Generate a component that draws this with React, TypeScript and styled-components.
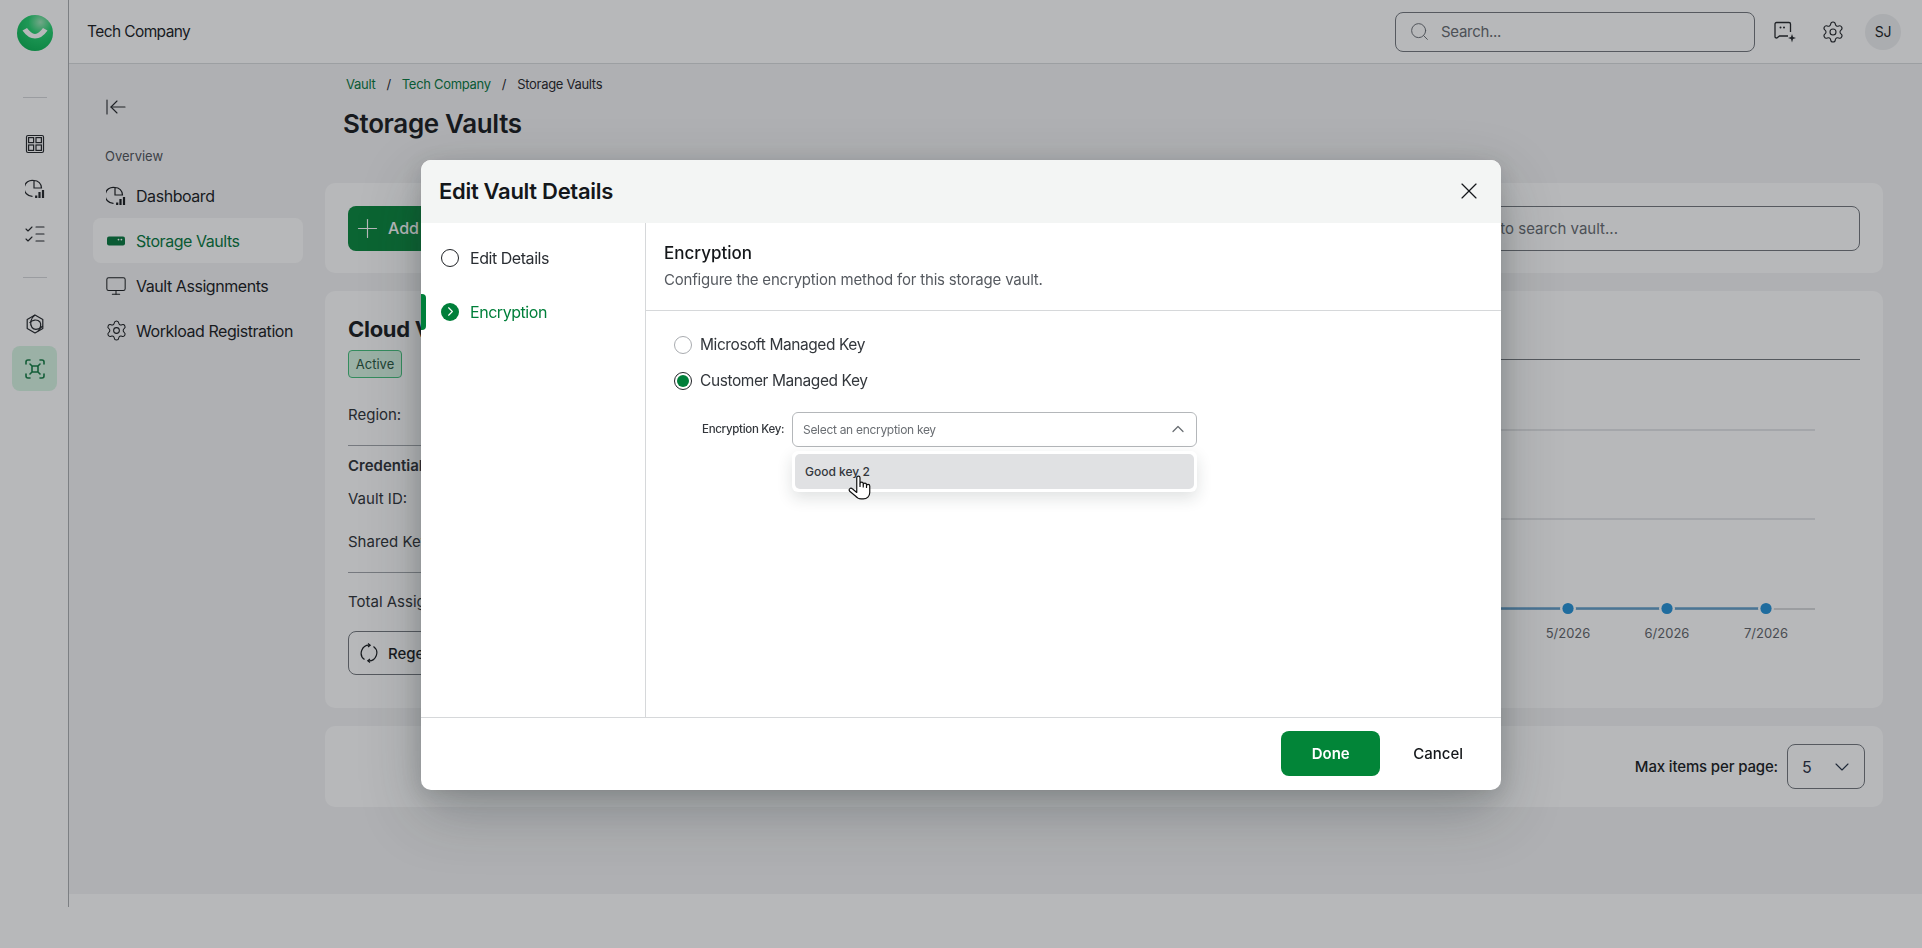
import React from 'react'
import styled, { createGlobalStyle } from 'styled-components'
import {
  ArrowLeftToLine,
  ChevronDown,
  ChevronRight,
  ChevronUp,
  ListChecks,
  Monitor,
  Plus,
  Search,
  Settings,
  X,
} from 'lucide-react'

const GlobalStyle = createGlobalStyle`
  html, body {
    margin: 0;
    height: 100%;
    overflow: hidden;
    font-family: Inter, "Noto Sans", sans-serif;
    color: #14171a;
  }
  * { box-sizing: border-box; }
`

const Shell = styled.div`
  display: flex;
  width: 100%;
  height: 948px;
  background: #fff;
`

const Rail = styled.nav`
  width: 69px;
  height: 907px;
  flex: none;
  display: flex;
  flex-direction: column;
  align-items: center;
  padding: 15px 0 0 1px;
  border-right: 1px solid #a9abaf;
  background: #fff;
`

const RailDivider = styled.div<{ $top: number }>`
  width: 24px;
  height: 1px;
  flex: none;
  margin: ${({ $top }) => $top}px 0 23px;
  background: #d4d6d9;
`

const RailItem = styled.div<{ $active?: boolean }>`
  width: 45px;
  height: 45px;
  flex: none;
  display: flex;
  align-items: center;
  justify-content: center;
  border-radius: 8px;
  color: #1f2226;
  background: ${({ $active }) => ($active ? '#d6f5e2' : 'transparent')};
`

const Main = styled.div`
  flex: 1;
  min-width: 0;
  display: flex;
  flex-direction: column;
  background: #f4f4f5;
`

const TopBar = styled.header`
  height: 64px;
  flex: none;
  display: flex;
  align-items: center;
  padding: 0 21px 0 18px;
  border-bottom: 1px solid #d8dadc;
  background: #fff;
`

const CompanyName = styled.div`
  flex: 1;
  font-size: 15.5px;
  letter-spacing: -0.6px;
`

const TopSearch = styled.div`
  width: 360px;
  height: 40px;
  display: flex;
  align-items: center;
  gap: 11px;
  padding-left: 13px;
  margin-right: 19px;
  border: 1px solid #70747a;
  border-radius: 8px;
  color: #63676d;
  font-size: 15px;
  letter-spacing: -0.3px;
`

const TopActions = styled.div`
  display: flex;
  align-items: center;
  gap: 25px;
  color: #1f2226;
`

const Avatar = styled.div`
  width: 36px;
  height: 36px;
  margin-left: 20px;
  display: flex;
  align-items: center;
  justify-content: center;
  border-radius: 50%;
  font-size: 14px;
  letter-spacing: -0.3px;
  background: #eeeff0;
`

const Body = styled.div`
  flex: 1;
  min-height: 0;
  display: flex;
`

const Sidebar = styled.aside`
  width: 256px;
  flex: none;
  padding: 31px 22px 0 24px;
`

const CollapseButton = styled.div`
  height: 24px;
  margin-left: 11px;
  color: #1f2226;
`

const SidebarLabel = styled.div`
  margin: 27px 0 7px 12px;
  font-size: 13px;
  line-height: 20px;
  color: #4c5056;
`

const NavItem = styled.div<{ $active?: boolean }>`
  height: 45px;
  display: flex;
  align-items: center;
  gap: 11px;
  padding-left: 14px;
  border-radius: 8px;
  font-size: 16px;
  letter-spacing: -0.45px;
  color: ${({ $active }) => ($active ? '#00753a' : '#14171a')};
  background: ${({ $active }) => ($active ? '#fff' : 'transparent')};
`

const NavIcon = styled.span`
  width: 18px;
  flex: none;
  display: flex;
  justify-content: center;

  svg {
    flex: none;
  }
`

const Content = styled.main`
  flex: 1;
  min-width: 0;
  padding: 10px 39px 0 0;
`

const Breadcrumb = styled.div`
  display: flex;
  gap: 11px;
  padding-left: 21px;
  font-size: 13px;
  line-height: 20px;
  letter-spacing: -0.3px;
  color: #1d2126;
`

const Crumb = styled.span<{ $link?: boolean }>`
  color: ${({ $link }) => ($link ? '#00753a' : 'inherit')};
`

const PageTitle = styled.h1`
  margin: 14px 0 43px 18px;
  font-size: 26px;
  line-height: 32px;
  font-weight: 600;
  letter-spacing: -0.35px;
`

const Card = styled.section`
  border-radius: 10px;
  background: #fff;
`

const ToolbarCard = styled(Card)`
  height: 90px;
  display: flex;
  align-items: center;
  justify-content: space-between;
  padding: 0 23px;
  margin-bottom: 18px;
`

const AddButton = styled.div`
  width: 170px;
  height: 45px;
  display: flex;
  align-items: center;
  gap: 5px;
  padding-left: 4px;
  border-radius: 8px;
  font-size: 16px;
  font-weight: 500;
  color: #fff;
  background: #028538;
`

const VaultSearch = styled.div`
  width: 440px;
  height: 45px;
  display: flex;
  align-items: center;
  padding-left: 40px;
  border: 1px solid #70747a;
  border-radius: 8px;
  font-size: 15px;
  color: #63676d;
`

const VaultCard = styled(Card)`
  height: 417px;
  display: flex;
  padding: 23px 23px 0;
  margin-bottom: 18px;
`

const VaultInfo = styled.div`
  width: 420px;
  flex: none;
`

const VaultName = styled.h2`
  margin: 0;
  font-size: 22px;
  line-height: 30px;
  font-weight: 700;
  letter-spacing: -0.3px;
`

const Badge = styled.div`
  width: 54px;
  height: 28px;
  margin-top: 6px;
  display: flex;
  align-items: center;
  justify-content: center;
  border: 1px solid #3fbf78;
  border-radius: 4px;
  font-size: 13px;
  color: #22523a;
  background: #d6f5e2;
`

const InfoRow = styled.div<{ $top: number; $bold?: boolean }>`
  margin-top: ${({ $top }) => $top}px;
  font-size: 15px;
  line-height: 24px;
  font-weight: ${({ $bold }) => ($bold ? 600 : 400)};
  color: #2a2e33;
`

const InfoDivider = styled.div<{ $top: number }>`
  height: 1px;
  margin-top: ${({ $top }) => $top}px;
  background: #9fa3a8;
`

const RegenerateButton = styled.div`
  width: 240px;
  height: 44px;
  margin-top: 17px;
  display: flex;
  align-items: center;
  gap: 9px;
  padding-left: 10px;
  border: 1px solid #70747a;
  border-radius: 8px;
  font-size: 15px;
  font-weight: 500;
`

const ChartColumn = styled.div`
  flex: 1;
  min-width: 0;
`

const ChartHeader = styled.div`
  height: 46px;
  padding-bottom: 10px;
  border-bottom: 1px solid #6f7378;
  font-size: 15px;
  font-weight: 600;
`

const ChartSvg = styled.svg`
  display: block;
  width: 1092px;
  height: 300px;
  font-family: Inter, sans-serif;
`

const PagerCard = styled(Card)`
  height: 81px;
  display: flex;
  align-items: center;
  justify-content: flex-end;
  gap: 9px;
  padding-right: 18px;
  font-size: 15px;
  font-weight: 500;
  letter-spacing: -0.15px;
`

const PageSize = styled.div`
  width: 78px;
  height: 45px;
  display: flex;
  align-items: center;
  justify-content: space-between;
  padding: 0 10px 0 14px;
  border: 1px solid #70747a;
  border-radius: 8px;
  font-size: 16px;
  font-weight: 400;
  color: #1f2c40;
`

const BottomBar = styled.footer`
  height: 54px;
  flex: none;
  background: #fff;
`

const Overlay = styled.div`
  position: fixed;
  inset: 0;
  padding-top: 1px;
  display: flex;
  align-items: center;
  justify-content: center;
  background: rgba(31, 34, 40, 0.32);
`

const Dialog = styled.div`
  width: 1080px;
  height: 630px;
  display: flex;
  flex-direction: column;
  overflow: hidden;
  border-radius: 10px;
  background: #fff;
  box-shadow: 0 22px 60px rgba(30, 40, 40, 0.28), 0 4px 20px rgba(30, 40, 40, 0.16);
`

const DialogHeader = styled.div`
  height: 63px;
  flex: none;
  display: flex;
  align-items: center;
  justify-content: space-between;
  padding: 0 18px;
  background: #f3f5f4;
  color: #14171a;
`

const DialogTitle = styled.h2`
  margin: 0;
  font-size: 22px;
  font-weight: 600;
  letter-spacing: -0.3px;
`

const DialogBody = styled.div`
  flex: 1;
  min-height: 0;
  display: flex;
`

const Steps = styled.div`
  width: 225px;
  flex: none;
  padding-top: 8px;
  border-right: 1px solid #d6d8da;
`

const Step = styled.div<{ $active?: boolean }>`
  position: relative;
  height: 54px;
  display: flex;
  align-items: center;
  gap: 11px;
  padding-left: 20px;
  font-size: 16px;
  letter-spacing: -0.45px;
  color: ${({ $active }) => ($active ? '#007f3a' : '#2a2e33')};

  ${({ $active }) =>
    $active &&
    `
    &::before {
      content: '';
      position: absolute;
      left: 0;
      top: 9px;
      width: 5px;
      height: 36px;
      border-radius: 0 4px 4px 0;
      background: #007f3a;
    }
  `}
`

const StepCircle = styled.div<{ $active?: boolean }>`
  width: 18px;
  height: 18px;
  flex: none;
  display: flex;
  align-items: center;
  justify-content: center;
  border-radius: 50%;
  border: ${({ $active }) => ($active ? 'none' : '1.5px solid #1f2226')};
  color: #fff;
  background: ${({ $active }) => ($active ? '#007f3a' : '#fff')};
`

const Panel = styled.div`
  flex: 1;
  min-width: 0;
`

const PanelHeader = styled.div`
  height: 88px;
  padding: 18px 18px 0;
  border-bottom: 1px solid #d6d8da;
`

const PanelTitle = styled.div`
  font-size: 17px;
  line-height: 24px;
  font-weight: 500;
`

const PanelSubtitle = styled.div`
  margin-top: 4px;
  font-size: 15px;
  line-height: 22px;
  letter-spacing: -0.2px;
  color: #565a60;
`

const PanelContent = styled.div`
  padding: 16px 28px 0;
`

const RadioRow = styled.label`
  height: 36px;
  display: flex;
  align-items: center;
  gap: 8px;
  font-size: 15.5px;
  letter-spacing: -0.42px;
  color: #33373c;
`

const Radio = styled.span<{ $checked?: boolean }>`
  width: 18px;
  height: 18px;
  flex: none;
  display: flex;
  align-items: center;
  justify-content: center;
  border-radius: 50%;
  border: 1px solid ${({ $checked }) => ($checked ? '#1f2226' : '#a8abaf')};

  &::after {
    content: '';
    width: 12px;
    height: 12px;
    border-radius: 50%;
    background: ${({ $checked }) => ($checked ? '#007f3a' : 'transparent')};
  }
`

const KeyRow = styled.div`
  display: flex;
  align-items: center;
  gap: 7px;
  margin: 13px 0 0 28px;
`

const KeyLabel = styled.div`
  width: 83px;
  flex: none;
  font-size: 11.5px;
  font-weight: 500;
  letter-spacing: -0.3px;
  color: #33373c;
  white-space: nowrap;
`

const KeySelect = styled.div`
  width: 405px;
  height: 35px;
  display: flex;
  align-items: center;
  justify-content: space-between;
  padding: 0 8px 0 10px;
  border: 1px solid #b4b7ba;
  border-radius: 6px;
  font-size: 12px;
  letter-spacing: -0.3px;
  color: #6a6e73;
`

const KeyMenu = styled.div`
  position: relative;
  width: 405px;
  height: 41px;
  margin: 4px 0 0 118px;
  padding: 3px;
  border-radius: 6px;
  background: #fff;
  box-shadow: 0 6px 16px rgba(30, 40, 40, 0.14);
`

const KeyOption = styled.div`
  height: 35px;
  display: flex;
  align-items: center;
  padding-left: 10px;
  border-radius: 5px;
  font-size: 12px;
  font-weight: 500;
  color: #33373c;
  background: #e0e1e3;
`

const HandCursor = styled.svg`
  position: absolute;
  left: 55px;
  top: 23px;
`

const DialogFooter = styled.div`
  height: 73px;
  flex: none;
  display: flex;
  align-items: center;
  justify-content: flex-end;
  padding: 0 38px 0 0;
  border-top: 1px solid #d6d8da;
`

const DoneButton = styled.div`
  width: 99px;
  height: 45px;
  display: flex;
  align-items: center;
  justify-content: center;
  border-radius: 8px;
  font-size: 15px;
  font-weight: 600;
  color: #fff;
  background: #028538;
`

const CancelButton = styled.div`
  margin-left: 33px;
  font-size: 15px;
  font-weight: 500;
  color: #14171a;
`

const Logo = () => (
  <svg width="36" height="36" viewBox="0 0 36 36">
    <defs>
      <radialGradient id="logoFill" cx="0.65" cy="0.2" r="0.95">
        <stop offset="0" stopColor="#9be6b6" />
        <stop offset="0.35" stopColor="#1fd06c" />
        <stop offset="1" stopColor="#00ae4b" />
      </radialGradient>
    </defs>
    <circle cx="18" cy="18" r="18" fill="url(#logoFill)" />
    <path d="M5.5 15.5 L10 13 Q14 18.5 18 19 Q22 18.5 26 13 L30.5 15.500 Q25 23.5 18 23.5 Q11 23.5 5.5 15.5 Z" fill="#fff" />
  </svg>
)

const WidgetsIcon = () => (
  <svg width="20" height="20" viewBox="0 0 20 20" fill="none" stroke="currentColor" strokeWidth="1.2">
    <rect x="1.5" y="1.5" width="17" height="17" rx="1.5" />
    <rect x="3.6" y="3.6" width="5" height="5" />
    <rect x="11" y="3.6" width="5.4" height="5" />
    <rect x="3.6" y="11" width="5" height="5.4" />
    <rect x="11" y="11" width="5.4" height="5.4" />
  </svg>
)

const PieBarsIcon = () => (
  <svg width="20" height="20" viewBox="0 0 20 20" fill="none" stroke="currentColor" strokeWidth="1.2">
    <path d="M9 1.5 A8 8 0 1 0 7.5 17.3" />
    <path d="M9 1.5 V9 H16.5 A7.5 7.5 0 0 0 9 1.5 Z" />
    <path d="M11.2 19 V16.5 M14.5 19 V13 M18 19 V11" strokeWidth="2.2" />
  </svg>
)

const HexSwirlIcon = () => (
  <svg width="20" height="20" viewBox="0 0 20 20" fill="none" stroke="currentColor" strokeWidth="1.2" strokeLinejoin="round">
    <path d="M10 1 L17.8 5.500 V14.5 L10 19 L2.200 14.5 V5.500 Z" />
    <path d="M10 1 C5.500 4 4.500 10 7 13.500 C9.500 16.500 14.500 15.500 17.800 12" />
    <path d="M4.500 9 C7 5.500 12.500 5 15 8 C16.500 10.500 15.500 14.500 13 17" />
  </svg>
)

const ScanIcon = () => (
  <svg width="20" height="20" viewBox="0 0 20 20" fill="none" stroke="#0f7a40" strokeWidth="1.6" strokeLinecap="round">
    <path d="M1 5 V3 A2 2 0 0 1 3 1 H5 M15 1 H17 A2 2 0 0 1 19 3 V5 M19 15 V17 A2 2 0 0 1 17 19 H15 M5 19 H3 A2 2 0 0 1 1 17 V15" />
    <rect x="7" y="7" width="6" height="6" rx="1" />
    <path d="M5 5 L7 7 M15 5 L13 7 M15 15 L13 13 M5 15 L7 13" />
  </svg>
)

const VaultPillIcon = () => (
  <svg width="18" height="18" viewBox="0 0 18 18">
    <rect x="0" y="4.5" width="18" height="9" rx="2" fill="#00753a" />
    <circle cx="11.5" cy="7.6" r="0.9" fill="#fff" />
    <circle cx="14.4" cy="7.6" r="0.9" fill="#fff" />
  </svg>
)

const ChatSparkIcon = () => (
  <svg width="22" height="22" viewBox="0 0 22 22" fill="none" stroke="currentColor" strokeWidth="1.3">
    <path d="M14 15 H5.5 L3.5 16.5 A1.5 1.5 0 0 1 1 16 V3 A1.5 1.5 0 0 1 2.5 1.5 H15 A1.5 1.5 0 0 1 16.5 3 V4" />
    <path d="M16.5 4 V11" />
    <circle cx="6.5" cy="6.5" r="1" fill="currentColor" stroke="none" />
    <circle cx="10" cy="6.5" r="1" fill="currentColor" stroke="none" />
    <path d="M18 13 L19 16 L22 17 L19 18 L18 21.5 L17 18 L14 17 L17 16 Z" fill="currentColor" stroke="none" />
  </svg>
)

const CycleIcon = () => (
  <svg width="20" height="20" viewBox="0 0 20 20" fill="none" stroke="currentColor" strokeWidth="1.2">
    <path d="M11 2.2 A8 8 0 0 0 5.5 16.6 M9 17.8 A8 8 0 0 0 14.5 3.4" />
    <path d="M9 0.5 L11.2 2.2 L9 4 M11 16 L8.8 17.8 L11 19.5" />
  </svg>
)

const months = [
  { label: '1/2026', x: 1172 },
  { label: '2/2026', x: 1271 },
  { label: '3/2026', x: 1370 },
  { label: '4/2026', x: 1469 },
  { label: '5/2026', x: 1568 },
  { label: '6/2026', x: 1667 },
  { label: '7/2026', x: 1766 },
]

// viewBox uses page coordinates so the rows and points read like the original chart
const UsageChart = () => (
  <ChartSvg viewBox="768 360 1092 300">
    <path d="M1100 430 H1815 M1100 519 H1815" stroke="#dcdde0" strokeWidth="1.4" />
    <path d="M1100 609 H1815" stroke="#c9cacc" strokeWidth="1.4" />
    <path d="M1172 608.5 H1766" stroke="#5f9cc9" strokeWidth="2.4" />
    {months.map(({ label, x }) => (
      <g key={label}>
        <circle cx={x} cy={608.5} r="8" fill="#fff" />
        <circle cx={x} cy={608.5} r="5.6" fill="#1f8fd6" />
        <text x={x} y={638} textAnchor="middle" fontSize="13" fill="#5d6166">
          {label}
        </text>
      </g>
    ))}
  </ChartSvg>
)

const App = () => (
  <>
    <GlobalStyle />
    <Shell>
      <Rail>
        <Logo />
        <RailDivider $top={46} />
        <RailItem><WidgetsIcon /></RailItem>
        <RailItem><PieBarsIcon /></RailItem>
        <RailItem><ListChecks size={24} strokeWidth={1.1} /></RailItem>
        <RailDivider $top={21} />
        <RailItem><HexSwirlIcon /></RailItem>
        <RailItem $active><ScanIcon /></RailItem>
      </Rail>
      <Main>
        <TopBar>
          <CompanyName>Tech Company</CompanyName>
          <TopSearch>
            <Search size={21} strokeWidth={1.1} />
            <span>Search...</span>
          </TopSearch>
          <TopActions>
            <ChatSparkIcon />
            <Settings size={24} strokeWidth={1.1} />
          </TopActions>
          <Avatar>SJ</Avatar>
        </TopBar>
        <Body>
          <Sidebar>
            <CollapseButton>
              <ArrowLeftToLine size={24} strokeWidth={1.1} />
            </CollapseButton>
            <SidebarLabel>Overview</SidebarLabel>
            <NavItem><NavIcon><PieBarsIcon /></NavIcon>Dashboard</NavItem>
            <NavItem $active><NavIcon><VaultPillIcon /></NavIcon>Storage Vaults</NavItem>
            <NavItem><NavIcon><Monitor size={22} strokeWidth={1.1} /></NavIcon>Vault Assignments</NavItem>
            <NavItem><NavIcon><Settings size={23} strokeWidth={1.1} /></NavIcon>Workload Registration</NavItem>
          </Sidebar>
          <Content>
            <Breadcrumb>
              <Crumb $link>Vault</Crumb>
              <span>/</span>
              <Crumb $link>Tech Company</Crumb>
              <span>/</span>
              <Crumb>Storage Vaults</Crumb>
            </Breadcrumb>
            <PageTitle>Storage Vaults</PageTitle>
            <ToolbarCard>
              <AddButton>
                <Plus size={31} strokeWidth={0.9} />
                Add Vault
              </AddButton>
              <VaultSearch>Type to search vault...</VaultSearch>
            </ToolbarCard>
            <VaultCard>
              <VaultInfo>
                <VaultName>Cloud Vault</VaultName>
                <Badge>Active</Badge>
                <InfoRow $top={25}>Region:</InfoRow>
                <InfoDivider $top={18} />
                <InfoRow $top={8} $bold>Credentials</InfoRow>
                <InfoRow $top={9}>Vault ID:</InfoRow>
                <InfoRow $top={19}>Shared Key:</InfoRow>
                <InfoDivider $top={18} />
                <InfoRow $top={17}>Total Assigned:</InfoRow>
                <RegenerateButton>
                  <CycleIcon />
                  Regenerate Key
                </RegenerateButton>
              </VaultInfo>
              <ChartColumn>
                <ChartHeader>Usage</ChartHeader>
                <UsageChart />
              </ChartColumn>
            </VaultCard>
            <PagerCard>
              Max items per page:
              <PageSize>
                5
                <ChevronDown size={24} strokeWidth={1.1} />
              </PageSize>
            </PagerCard>
          </Content>
        </Body>
        <BottomBar />
      </Main>
    </Shell>
    <Overlay>
      <Dialog>
        <DialogHeader>
          <DialogTitle>Edit Vault Details</DialogTitle>
          <X size={28} strokeWidth={1} />
        </DialogHeader>
        <DialogBody>
          <Steps>
            <Step>
              <StepCircle />
              Edit Details
            </Step>
            <Step $active>
              <StepCircle $active>
                <ChevronRight size={15} strokeWidth={1.8} />
              </StepCircle>
              Encryption
            </Step>
          </Steps>
          <Panel>
            <PanelHeader>
              <PanelTitle>Encryption</PanelTitle>
              <PanelSubtitle>Configure the encryption method for this storage vault.</PanelSubtitle>
            </PanelHeader>
            <PanelContent>
              <RadioRow>
                <Radio />
                Microsoft Managed Key
              </RadioRow>
              <RadioRow>
                <Radio $checked />
                Customer Managed Key
              </RadioRow>
              <KeyRow>
                <KeyLabel>Encryption Key:</KeyLabel>
                <KeySelect>
                  Select an encryption key
                  <ChevronUp size={20} strokeWidth={1.5} />
                </KeySelect>
              </KeyRow>
              <KeyMenu>
                <KeyOption>Good key 2</KeyOption>
                <HandCursor width="26" height="26" viewBox="0 0 24 24" fill="#fff" stroke="#111" strokeWidth="1.1" strokeLinejoin="round">
                  <path d="M9 12V3.5a1.5 1.5 0 0 1 3 0V9a1.5 1.5 0 0 1 3 0v1a1.5 1.5 0 0 1 3 0v1a1.5 1.5 0 0 1 3 0v6c0 3.5-2.5 6-6 6h-2c-2.5 0-4-1-5.5-3L2.5 16c-.8-1-.6-2 .1-2.5.8-.6 1.8-.4 2.6.4L9 17Z" />
                  <path d="M12 9v3M15 10v2.500M18 11v2" fill="none" />
                </HandCursor>
              </KeyMenu>
            </PanelContent>
          </Panel>
        </DialogBody>
        <DialogFooter>
          <DoneButton>Done</DoneButton>
          <CancelButton>Cancel</CancelButton>
        </DialogFooter>
      </Dialog>
    </Overlay>
  </>
)

export default App
